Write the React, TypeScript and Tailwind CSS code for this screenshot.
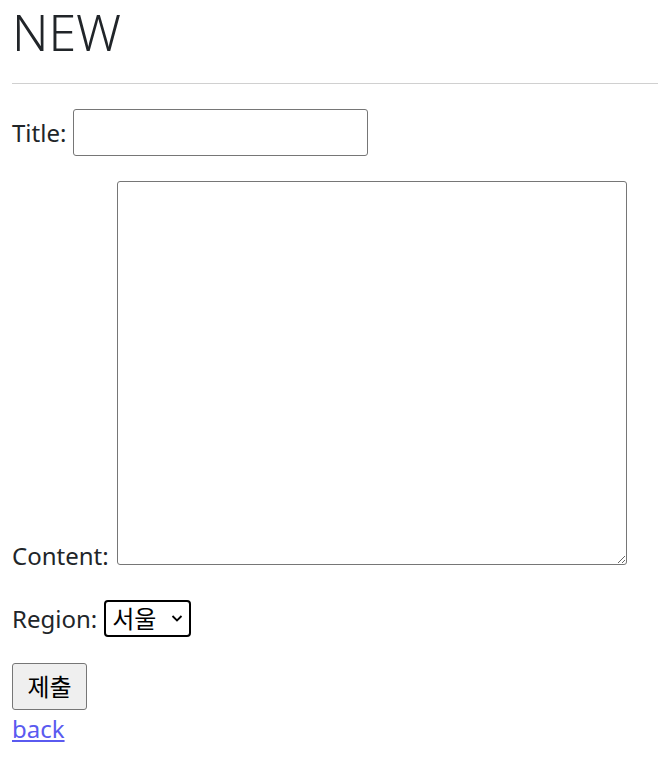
export default function App() {
  return (
    <div className="min-h-screen bg-white pl-3 text-[#212529] [font-family:'Noto_Sans','Noto_Sans_CJK_KR',sans-serif]">
      <h1 className="text-[50px] font-[350] leading-[64px]">NEW</h1>
      <hr className="mt-[19px] border-t border-[#d0d0d0]" />

      <form className="flex flex-col text-[24px]">
        <div className="mt-[25px] flex items-center gap-[7px]">
          <label htmlFor="title">Title:</label>
          <input
            id="title"
            type="text"
            className="h-[47px] w-[295px] rounded-[3px] border border-[#767676] px-2 outline-none"
          />
        </div>

        <div className="mt-[25px] flex items-end gap-[8px]">
          <label htmlFor="content" className="leading-[19px]">Content:</label>
          <textarea
            id="content"
            className="h-[384px] w-[510px] rounded-[3px] border border-[#767676] outline-none"
          />
        </div>

        <div className="mt-[35px] flex items-center gap-[7px]">
          <label htmlFor="region">Region:</label>
          <div className="relative">
            <select
              id="region"
              defaultValue="서울"
              className="h-[37px] w-[87px] appearance-none rounded-[4px] border-2 border-black bg-white pl-[6px] text-[24px] leading-none text-black outline-none"
            >
              <option>서울</option>
              <option>부산</option>
              <option>대구</option>
            </select>
            <svg
              className="pointer-events-none absolute right-[8px] top-[14px] h-[9px] w-[12px]"
              viewBox="0 0 12 9"
              fill="none"
              stroke="black"
              strokeWidth={1.8}
            >
              <path d="M1.5 2l4.5 4.5L10.5 2" />
            </svg>
          </div>
        </div>

        <div className="mt-[26px]">
          <button
            type="submit"
            className="h-[47px] w-[75px] rounded-[3px] border border-[#767676] bg-[#efefef] text-[24px] text-black"
          >
            제출
          </button>
        </div>
      </form>

      <a href="#" className="mt-[4px] block w-fit text-[24px] leading-[30px] text-[#5a5af0] underline">
        back
      </a>
    </div>
  );
}
